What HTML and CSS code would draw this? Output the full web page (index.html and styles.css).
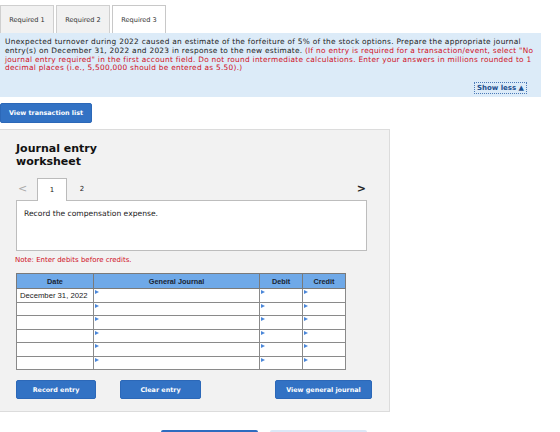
FILE: index.html
```html
<!DOCTYPE html>
<html>
<head>
<meta charset="utf-8">
<link rel="stylesheet" href="styles.css">
</head>
<body>
<div class="tabs">
  <div class="tab">Required 1</div>
  <div class="tab">Required 2</div>
  <div class="tab active">Required 3</div>
</div>
<div class="info">
  <p>Unexpected turnover during 2022 caused an estimate of the forfeiture of 5% of the stock options. Prepare the appropriate journal entry(s) on December 31, 2022 and 2023 in response to the new estimate. <span class="red">(If no entry is required for a transaction/event, select "No journal entry required" in the first account field. Do not round intermediate calculations. Enter your answers in millions rounded to 1 decimal places (i.e., 5,500,000 should be entered as 5.50).)</span></p>
  <div class="showless"><span>Show less ▲</span></div>
</div>
<div class="tl-row"><button class="btn">View transaction list</button></div>
<div class="panel">
  <h2>Journal entry<br>worksheet</h2>
  <div class="pager">
    <span class="arrow prev">&lt;</span>
    <span class="page active">1</span>
    <span class="page">2</span>
    <span class="spacer"></span>
    <span class="arrow next">&gt;</span>
  </div>
  <div class="desc">Record the compensation expense.</div>
  <div class="note">Note: Enter debits before credits.</div>
  <table class="journal">
    <thead>
      <tr><th class="c-date">Date</th><th class="c-gj">General Journal</th><th class="c-num">Debit</th><th class="c-num">Credit</th></tr>
    </thead>
    <tbody>
      <tr><td class="c-date">December 31, 2022</td><td><i class="mk"></i></td><td><i class="mk"></i></td><td><i class="mk"></i></td></tr>
      <tr><td></td><td><i class="mk"></i></td><td><i class="mk"></i></td><td><i class="mk"></i></td></tr>
      <tr><td></td><td><i class="mk"></i></td><td><i class="mk"></i></td><td><i class="mk"></i></td></tr>
      <tr><td></td><td><i class="mk"></i></td><td><i class="mk"></i></td><td><i class="mk"></i></td></tr>
      <tr><td></td><td><i class="mk"></i></td><td><i class="mk"></i></td><td><i class="mk"></i></td></tr>
      <tr><td></td><td><i class="mk"></i></td><td><i class="mk"></i></td><td><i class="mk"></i></td></tr>
    </tbody>
  </table>
  <div class="actions">
    <button class="btn b-rec">Record entry</button>
    <button class="btn b-clear">Clear entry</button>
    <button class="btn b-view">View general journal</button>
  </div>
</div>
<div class="bottom">
  <div class="bb dark"></div>
  <div class="bb light"></div>
</div>
</body>
</html>
```
FILE: styles.css
```css
* { box-sizing: border-box; }
html, body { margin: 0; padding: 0; background: #fff; }
body {
  width: 560px; height: 432px; overflow: hidden;
  font-family: "DejaVu Sans", Verdana, sans-serif;
  color: #222;
}
.tabs { display: flex; gap: 2px; padding-top: 5px; height: 33px; }
.tab {
  width: 54px; height: 28px;
  border: 1px solid #cfcfcf; border-bottom: none;
  background: #f1f1f1;
  font-size: 6.6px; color: #333;
  display: flex; align-items: center; justify-content: center;
}
.tab.active { background: #fff; border-color: #c8c8c8; }
.info {
  width: 541px; height: 64px;
  background: #dcebf8;
  padding: 5px 1px 0 5px;
  font-size: 7.4px; line-height: 8.8px; letter-spacing: 0.27px;
}
.info p { margin: 0; color: #222; }
.red { color: #d0101e; }
.showless { display: flex; justify-content: flex-end; margin-top: 9px; padding-right: 13px; }
.showless span {
  border: 1px dotted #4b7ab8; color: #1d4f8f; font-weight: bold;
  font-size: 7px; padding: 1px 2px; line-height: 8px; letter-spacing: 0;
}
.tl-row { display: flex; align-items: flex-start; padding-top: 6px; height: 32px; }
.btn {
  background: #3272c4; color: #fff; border: 1px solid #2c68b8;
  border-radius: 2px; font-family: "DejaVu Sans", Verdana, sans-serif;
  font-weight: bold; font-size: 6.4px; padding: 0; cursor: pointer;
}
.tl-row .btn { width: 92px; height: 20px; }
.panel {
  width: 390px; height: 283px;
  background: #f2f2f2; border: 1px solid #dcdcdc; border-left: none;
  padding: 13px 0 0 16px;
}
.panel h2 { margin: 0; font-size: 11px; line-height: 12.5px; font-weight: bold; color: #111; }
.pager { display: flex; align-items: flex-end; height: 23px; margin-top: 9px; width: 350px; }
.arrow { font-size: 11px; line-height: 14px; align-self: center; }
.prev { color: #aaa; margin-left: 2px; width: 19px; }
.next { color: #222; font-weight: bold; }
.page {
  width: 30px; height: 23px; font-size: 7px;
  display: flex; align-items: center; justify-content: center;
}
.page.active {
  background: #fff; border: 1px solid #bbb; border-bottom: none;
  position: relative; top: 1px;
}
.spacer { flex: 1; }
.desc {
  width: 351px; height: 51px; background: #fff; border: 1px solid #bdbdbd;
  font-size: 7.6px; padding: 8px 7px;
}
.note { color: #d0101e; font-size: 7px; margin-top: 5px; margin-left: -1px; height: 17px; }
.journal {
  border-collapse: collapse; width: 330px;
  font-family: "Liberation Sans", Arial, sans-serif;
}
.journal th {
  background: #6fa9e8; color: #1a2533; font-size: 7.3px; font-weight: bold;
  height: 15px; border: 1px solid #7a7a7a; padding: 0;
}
.journal td {
  background: #fff; height: 13.5px; border: 1px solid #8a8a8a;
  font-size: 7.7px; padding: 0 0 0 3px; vertical-align: middle; position: relative;
  color: #222;
}
.c-date { width: 77px; }
.c-gj { width: 166px; }
.c-num { width: 43px; }
.mk {
  position: absolute; left: 1px; top: 1px;
  width: 0; height: 0;
  border-left: 4px solid #4a86d8; border-top: 2px solid transparent; border-bottom: 2px solid transparent;
}
.actions { display: flex; margin-top: 10px; height: 19px; }
.actions .btn { height: 19px; }
.b-rec { width: 80px; }
.b-clear { width: 81px; margin-left: 24px; }
.b-view { width: 97px; margin-left: 74px; }
.bottom { display: flex; padding-left: 161px; gap: 12px; margin-top: 18px; }
.bb { width: 97px; height: 10px; border-radius: 2px; }
.bb.dark { background: #2d6cc0; }
.bb.light { background: #dbe8f7; }
```
